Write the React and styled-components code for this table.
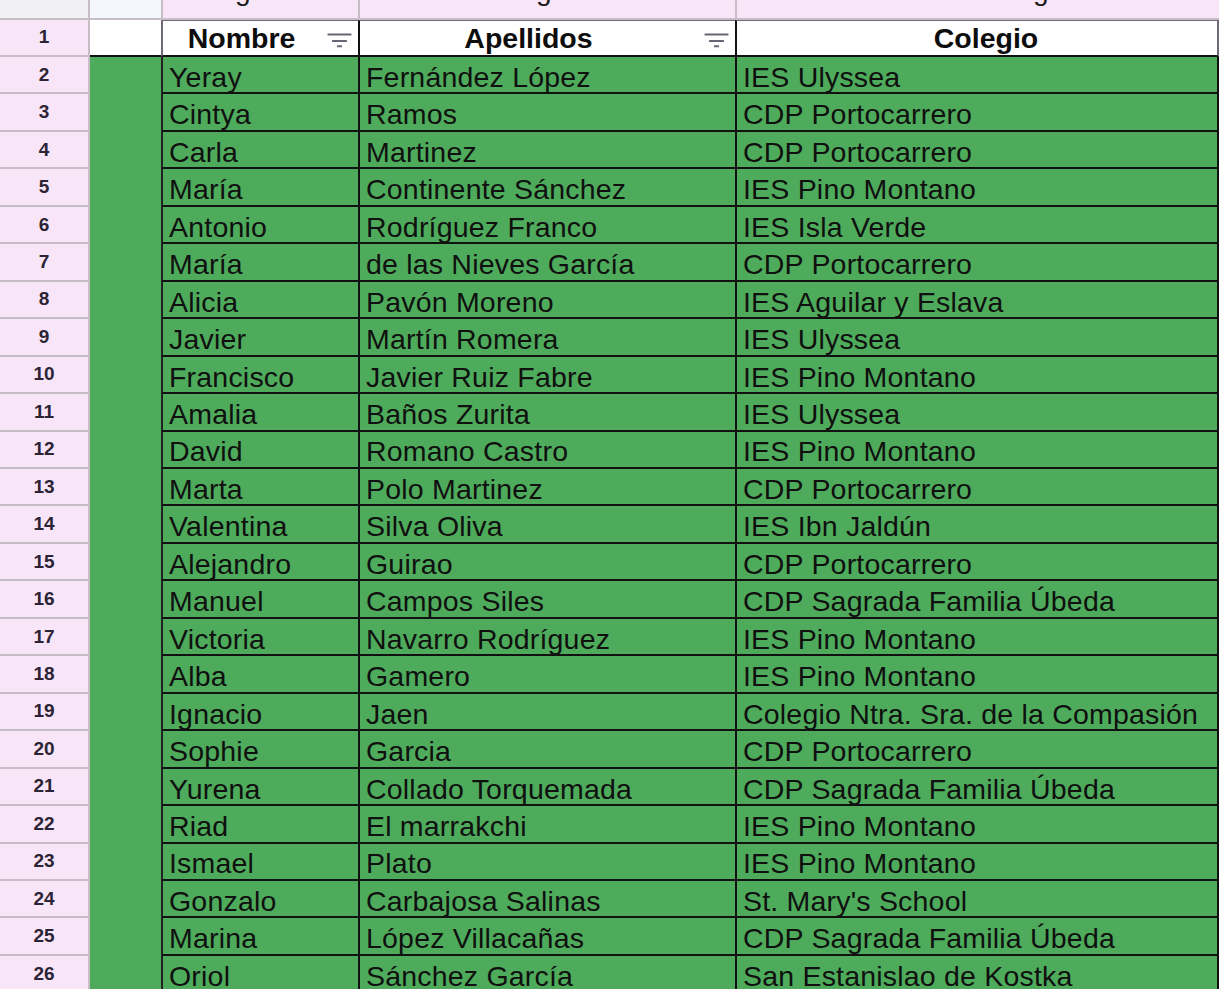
import React from "react";
import styled, { createGlobalStyle, css } from "styled-components";

const GlobalStyle = createGlobalStyle`
  html, body {
    margin: 0;
    padding: 0;
    background: #ffffff;
    overflow: hidden;
  }
  body {
    font-family: "Liberation Sans", Arial, sans-serif;
  }
`;

const GREEN = "#4eab5b";
const PINK = "#f8e6f8";
const GRID_GRAY = "#c6bdc6";
const LINE = "#111111";
const FRAME = "#6f6778";

const Sheet = styled.div`
  display: grid;
  grid-template-columns: 90px 71px 197px 377px 484px;
  grid-template-rows: 19.5px 37.5px;
  grid-auto-rows: 37.46px;
  width: 1219px;
  height: 989px;
  overflow: hidden;
  font-family: "Liberation Sans", Arial, sans-serif;
`;

const Corner = styled.div`
  background: #f1f1f3;
  border-right: 2px solid ${GRID_GRAY};
  border-bottom: 2px solid ${GRID_GRAY};
`;

const ColHead = styled.div`
  box-sizing: border-box;
  background: ${(p) => (p.$light ? "#f6f7fc" : PINK)};
  border-bottom: 2px solid ${GRID_GRAY};
  border-left: ${(p) => (p.$light ? "none" : `2px solid ${GRID_GRAY}`)};
  overflow: hidden;
  display: flex;
  align-items: flex-start;
  padding-left: ${(p) => p.$glyphAt || 0}px;
`;

const CutGlyph = styled.span`
  font-size: 28px;
  line-height: 28px;
  color: #1a1a1a;
  margin-top: -23px;
`;

const RowHead = styled.div`
  box-sizing: border-box;
  background: ${PINK};
  border-right: 2px solid ${GRID_GRAY};
  border-bottom: 2px solid ${GRID_GRAY};
  display: flex;
  align-items: center;
  justify-content: center;
  padding-top: 0;
  font-size: 19px;
  font-weight: 700;
  color: #2c2434;
`;

const SpacerCell = styled.div`
  box-sizing: border-box;
  background: ${(p) => (p.$header ? "#ffffff" : GREEN)};
  border-bottom: ${(p) => (p.$header ? `2px solid ${LINE}` : "none")};
`;

const Cell = styled.div`
  box-sizing: border-box;
  display: flex;
  align-items: flex-end;
  padding: 0 0 1.5px 6px;
  background: ${GREEN};
  color: #101010;
  font-size: 28.5px;
  letter-spacing: 0.2px;
  line-height: 28px;
  white-space: nowrap;
  overflow: hidden;
  border-left: 2px solid ${(p) => (p.$first ? "#222222" : LINE)};
  border-bottom: 2px solid ${LINE};
  ${(p) =>
    p.$last &&
    css`
      border-right: 2px solid ${LINE};
    `}
`;

const HeadCell = styled.div`
  box-sizing: border-box;
  position: relative;
  display: flex;
  align-items: center;
  justify-content: center;
  padding: 1px ${(p) => (p.$filter ? 38 : 0)}px 0 ${(p) => p.$shift || 0}px;
  background: #ffffff;
  color: #0d0d0d;
  font-size: 28.5px;
  line-height: 28px;
  font-weight: 700;
  white-space: nowrap;
  border-top: 1.5px solid ${FRAME};
  border-bottom: 2px solid ${LINE};
  border-left: 2px solid ${(p) => (p.$first ? FRAME : LINE)};
  ${(p) =>
    p.$last &&
    css`
      border-right: 2px solid ${FRAME};
    `}
`;

const FilterIcon = styled.svg`
  position: absolute;
  right: 6px;
  top: 12px;
  width: 25px;
  height: 15px;
`;

const Filter = () => (
  <FilterIcon viewBox="0 0 25 15">
    <rect x="0.5" y="0.5" width="24" height="2" rx="0.6" fill="#6b6475" />
    <rect x="5" y="7" width="15" height="2" rx="0.6" fill="#6b6475" />
    <rect x="10" y="12.3" width="5" height="2" rx="0.6" fill="#6b6475" />
  </FilterIcon>
);

const rows = [
  ["Yeray", "Fernández López", "IES Ulyssea"],
  ["Cintya", "Ramos", "CDP Portocarrero"],
  ["Carla", "Martinez", "CDP Portocarrero"],
  ["María", "Continente Sánchez", "IES Pino Montano"],
  ["Antonio", "Rodríguez Franco", "IES Isla Verde"],
  ["María", "de las Nieves García", "CDP Portocarrero"],
  ["Alicia", "Pavón Moreno", "IES Aguilar y Eslava"],
  ["Javier", "Martín Romera", "IES Ulyssea"],
  ["Francisco", "Javier Ruiz Fabre", "IES Pino Montano"],
  ["Amalia", "Baños Zurita", "IES Ulyssea"],
  ["David", "Romano Castro", "IES Pino Montano"],
  ["Marta", "Polo Martinez", "CDP Portocarrero"],
  ["Valentina", "Silva Oliva", "IES Ibn Jaldún"],
  ["Alejandro", "Guirao", "CDP Portocarrero"],
  ["Manuel", "Campos Siles", "CDP Sagrada Familia Úbeda"],
  ["Victoria", "Navarro Rodríguez", "IES Pino Montano"],
  ["Alba", "Gamero", "IES Pino Montano"],
  ["Ignacio", "Jaen", "Colegio Ntra. Sra. de la Compasión"],
  ["Sophie", "Garcia", "CDP Portocarrero"],
  ["Yurena", "Collado Torquemada", "CDP Sagrada Familia Úbeda"],
  ["Riad", "El marrakchi", "IES Pino Montano"],
  ["Ismael", "Plato", "IES Pino Montano"],
  ["Gonzalo", "Carbajosa Salinas", "St. Mary's School"],
  ["Marina", "López Villacañas", "CDP Sagrada Familia Úbeda"],
  ["Oriol", "Sánchez García", "San Estanislao de Kostka"],
];

export default function App() {
  return (
    <>
      <GlobalStyle />
      <Sheet>
        <Corner />
        <ColHead $light />
        <ColHead $glyphAt={72}>
          <CutGlyph>g</CutGlyph>
        </ColHead>
        <ColHead $glyphAt={176}>
          <CutGlyph>g</CutGlyph>
        </ColHead>
        <ColHead $glyphAt={296}>
          <CutGlyph>g</CutGlyph>
        </ColHead>

        <RowHead>1</RowHead>
        <SpacerCell $header />
        <HeadCell $first $filter>
          Nombre
          <Filter />
        </HeadCell>
        <HeadCell $filter>
          Apellidos
          <Filter />
        </HeadCell>
        <HeadCell $last $shift={18}>
          Colegio
        </HeadCell>

        {rows.map((r, i) => (
          <React.Fragment key={i}>
            <RowHead>{i + 2}</RowHead>
            <SpacerCell />
            <Cell $first>{r[0]}</Cell>
            <Cell>{r[1]}</Cell>
            <Cell $last>{r[2]}</Cell>
          </React.Fragment>
        ))}
      </Sheet>
    </>
  );
}
